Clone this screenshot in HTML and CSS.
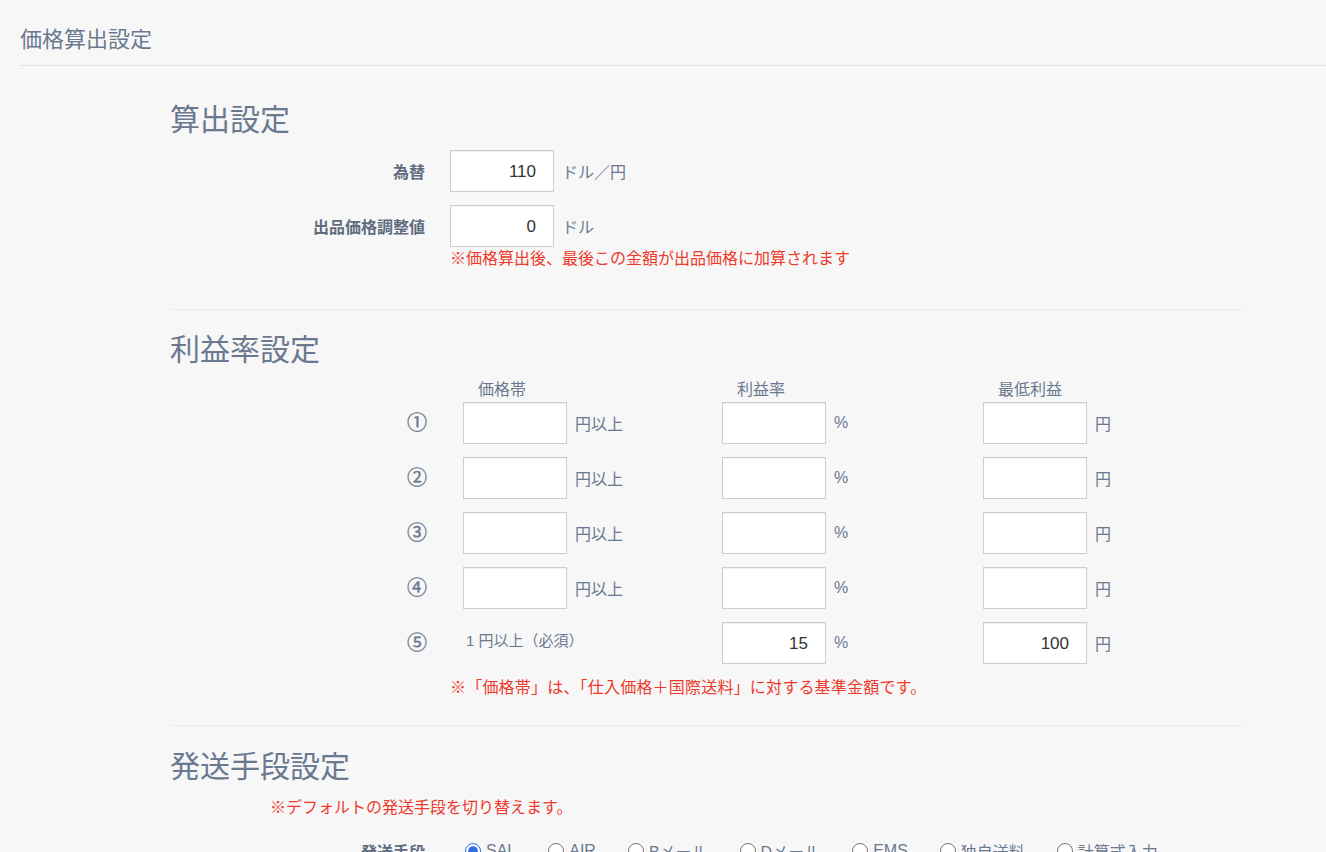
FILE: index.html
```html
<!DOCTYPE html>
<html lang="ja">
<head>
<meta charset="utf-8">
<title>価格算出設定</title>
<link rel="stylesheet" href="styles.css">
</head>
<body>
<div class="page">
  <h1 class="page-title">価格算出設定</h1>
  <div class="content">
    <section class="section calc">
      <h2 class="section-title">算出設定</h2>
      <div class="form-row">
        <label class="label">為替</label>
        <input class="num" type="text" value="110">
        <span class="unit">ドル／円</span>
      </div>
      <div class="form-row">
        <label class="label">出品価格調整値</label>
        <input class="num" type="text" value="0">
        <span class="unit">ドル</span>
      </div>
      <p class="note note-calc">※価格算出後、最後この金額が出品価格に加算されます</p>
    </section>
    <hr class="sep sep-1">
    <section class="section profit">
      <h2 class="section-title">利益率設定</h2>
      <div class="p-row p-head">
        <div class="p-idx"></div>
        <div class="p-cell c1"><span class="col-head">価格帯</span></div>
        <div class="p-cell c2"><span class="col-head">利益率</span></div>
        <div class="p-cell c3"><span class="col-head">最低利益</span></div>
      </div>
      <div class="p-row">
        <div class="p-idx">①</div>
        <div class="p-cell c1"><input class="num" type="text"><span class="unit">円以上</span></div>
        <div class="p-cell c2"><input class="num" type="text"><span class="unit">%</span></div>
        <div class="p-cell c3"><input class="num" type="text"><span class="unit">円</span></div>
      </div>
      <div class="p-row">
        <div class="p-idx">②</div>
        <div class="p-cell c1"><input class="num" type="text"><span class="unit">円以上</span></div>
        <div class="p-cell c2"><input class="num" type="text"><span class="unit">%</span></div>
        <div class="p-cell c3"><input class="num" type="text"><span class="unit">円</span></div>
      </div>
      <div class="p-row">
        <div class="p-idx">③</div>
        <div class="p-cell c1"><input class="num" type="text"><span class="unit">円以上</span></div>
        <div class="p-cell c2"><input class="num" type="text"><span class="unit">%</span></div>
        <div class="p-cell c3"><input class="num" type="text"><span class="unit">円</span></div>
      </div>
      <div class="p-row">
        <div class="p-idx">④</div>
        <div class="p-cell c1"><input class="num" type="text"><span class="unit">円以上</span></div>
        <div class="p-cell c2"><input class="num" type="text"><span class="unit">%</span></div>
        <div class="p-cell c3"><input class="num" type="text"><span class="unit">円</span></div>
      </div>
      <div class="p-row">
        <div class="p-idx">⑤</div>
        <div class="p-cell c1"><span class="fixed">1 円以上（必須）</span></div>
        <div class="p-cell c2"><input class="num" type="text" value="15"><span class="unit">%</span></div>
        <div class="p-cell c3"><input class="num" type="text" value="100"><span class="unit">円</span></div>
      </div>
      <p class="note note-profit">※「価格帯」は、「仕入価格＋国際送料」に対する基準金額です。</p>
    </section>
    <hr class="sep sep-2">
    <section class="section ship">
      <h2 class="section-title">発送手段設定</h2>
      <p class="note note-ship">※デフォルトの発送手段を切り替えます。</p>
      <div class="form-row radio-row">
        <label class="label">発送手段</label>
        <div class="radios">
          <label class="radio"><input type="radio" name="ship" checked><span>SAL</span></label>
          <label class="radio"><input type="radio" name="ship"><span>AIR</span></label>
          <label class="radio"><input type="radio" name="ship"><span>Bメール</span></label>
          <label class="radio"><input type="radio" name="ship"><span>Dメール</span></label>
          <label class="radio"><input type="radio" name="ship"><span>EMS</span></label>
          <label class="radio"><input type="radio" name="ship"><span>独自送料</span></label>
          <label class="radio"><input type="radio" name="ship"><span>計算式入力</span></label>
        </div>
      </div>
    </section>
  </div>
</div>
</body>
</html>
```
FILE: styles.css
```css
html, body {
  margin: 0;
  padding: 0;
  background: #f7f7f7;
}
body {
  font-family: "Liberation Sans", "Noto Sans CJK JP", sans-serif;
  color: #6b7990;
  overflow: hidden;
}
.page {
  height: 852px;
  overflow: hidden;
}
.page-title {
  margin: 0 0 0 20px;
  padding: 26px 0 11px;
  font-size: 22px;
  line-height: 28px;
  font-weight: normal;
  color: #6b7990;
  border-bottom: 1px solid #e1e1e1;
}
.content {
  margin-left: 170px;
  width: 1073px;
}
.section-title {
  margin: 0;
  font-size: 30px;
  line-height: 40px;
  font-weight: normal;
  color: #6b7990;
}
.calc .section-title {
  margin-top: 34px;
  margin-bottom: 10px;
}
.form-row {
  display: flex;
  align-items: center;
  margin-bottom: 13px;
}
.form-row:last-of-type {
  margin-bottom: 0;
}
.label {
  width: 255px;
  margin-right: 25px;
  text-align: right;
  font-weight: bold;
  font-size: 16px;
  color: #5f6c80;
  flex-shrink: 0;
}
.num {
  box-sizing: border-box;
  width: 104px;
  height: 42px;
  margin: 0;
  padding: 1px 17px 0 8px;
  border: 1px solid #cdcdcd;
  border-radius: 0;
  background: #fff;
  box-shadow: inset 0 1px 1px rgba(0, 0, 0, 0.06);
  font-family: "Liberation Sans", sans-serif;
  font-size: 17px;
  color: #333;
  text-align: right;
  outline: none;
}
.unit {
  margin-left: 8px;
  font-size: 16px;
  color: #6b7990;
}
.note {
  margin: 0;
  font-size: 16px;
  line-height: 22px;
  color: #ee3a2c;
}
.note-calc {
  margin-left: 280px;
  margin-top: 1px;
}
.sep {
  margin: 0;
  border: 0;
  border-top: 1px solid #ebebeb;
  height: 0;
}
.sep-1 {
  margin-top: 39px;
}
.profit .section-title {
  margin-top: 20px;
  margin-bottom: 9px;
}
.p-row {
  display: flex;
  align-items: center;
  height: 42px;
  margin-bottom: 13px;
}
.p-row.p-head {
  height: 22px;
  margin-bottom: 1px;
}
.p-idx {
  width: 257px;
  margin-right: 36px;
  text-align: right;
  font-size: 20px;
  line-height: 22px;
  color: #6b7990;
  flex-shrink: 0;
  -webkit-text-stroke: 0.4px #6b7990;
}
.p-cell {
  display: flex;
  align-items: center;
  flex-shrink: 0;
}
.p-cell.c1 { width: 259px; }
.p-cell.c2 { width: 261px; }
.p-cell.c3 { width: 200px; }
.col-head {
  padding-left: 15px;
  font-size: 16px;
  line-height: 22px;
  color: #6b7990;
}
.fixed {
  padding-left: 3px;
  padding-bottom: 8px;
  font-size: 15px;
  color: #6b7990;
}
.note-profit {
  margin-left: 280px;
  margin-top: 0;
  letter-spacing: 0.2px;
}
.sep-2 {
  margin-top: 26px;
}
.ship .section-title {
  margin-top: 21px;
  margin-bottom: 10px;
}
.note-ship {
  margin-left: 100px;
  margin-bottom: 20px;
}
.radio-row .label {
  margin-right: 40px;
}
.radios {
  display: flex;
  align-items: center;
}
.radio {
  display: flex;
  align-items: center;
  margin-right: 32px;
  font-size: 16px;
  color: #6b7990;
}
.radio input {
  margin: 0 5px 0 0;
  width: 16px;
  height: 16px;
  accent-color: #2f6fe0;
}
```
